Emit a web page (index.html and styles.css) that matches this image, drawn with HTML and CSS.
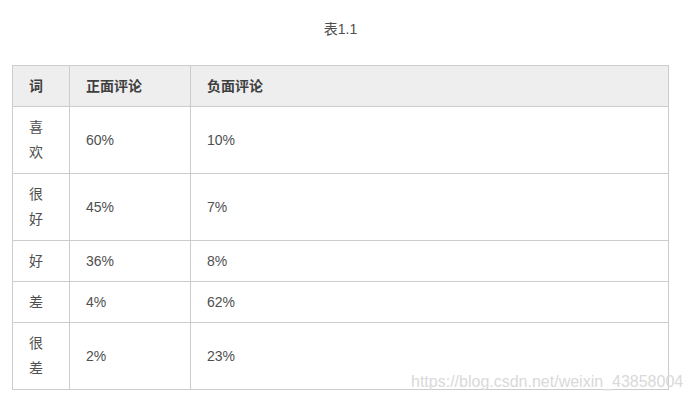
FILE: index.html
```html
<!DOCTYPE html>
<html>
<head>
<meta charset="utf-8">
<link rel="stylesheet" href="styles.css">
</head>
<body>
<div class="page">
  <div class="caption">表1.1</div>
  <table class="data">
    <colgroup>
      <col class="c1">
      <col class="c2">
      <col class="c3">
    </colgroup>
    <thead>
      <tr><th>词</th><th>正面评论</th><th>负面评论</th></tr>
    </thead>
    <tbody>
      <tr><td class="w2">喜<br>欢</td><td>60%</td><td>10%</td></tr>
      <tr><td class="w2">很<br>好</td><td>45%</td><td>7%</td></tr>
      <tr><td>好</td><td>36%</td><td>8%</td></tr>
      <tr><td>差</td><td>4%</td><td>62%</td></tr>
      <tr><td class="w2">很<br>差</td><td>2%</td><td>23%</td></tr>
    </tbody>
  </table>
  <div class="watermark">https://blog.csdn.net/weixin_43858004</div>
</div>
</body>
</html>
```

FILE: styles.css
```css
html, body {
  margin: 0;
  padding: 0;
  background: #ffffff;
}
body {
  font-family: "Liberation Sans", "Noto Sans CJK SC", sans-serif;
  font-size: 14px;
  color: #4f4f4f;
}
.page {
  position: relative;
  width: 691px;
  height: 403px;
  padding: 18px 0 0 12px;
  box-sizing: border-box;
}
.caption {
  width: 657px;
  text-align: center;
  line-height: 22px;
  height: 22px;
  margin-bottom: 25px;
}
.data {
  border-collapse: collapse;
  width: 657px;
  table-layout: fixed;
}
.c1 { width: 57px; }
.c2 { width: 121px; }
.data th, .data td {
  border: 1px solid #cccccc;
  padding: 8px 16px;
  line-height: 24px;
  text-align: left;
  vertical-align: middle;
}
.data th {
  background: #eeeeee;
  font-weight: bold;
  color: #3f3f3f;
}
.data td.w2 {
  line-height: 25px;
}
.watermark {
  position: absolute;
  left: 411px;
  top: 373px;
  font-size: 16px;
  color: #d9d9d9;
  white-space: nowrap;
}
```
